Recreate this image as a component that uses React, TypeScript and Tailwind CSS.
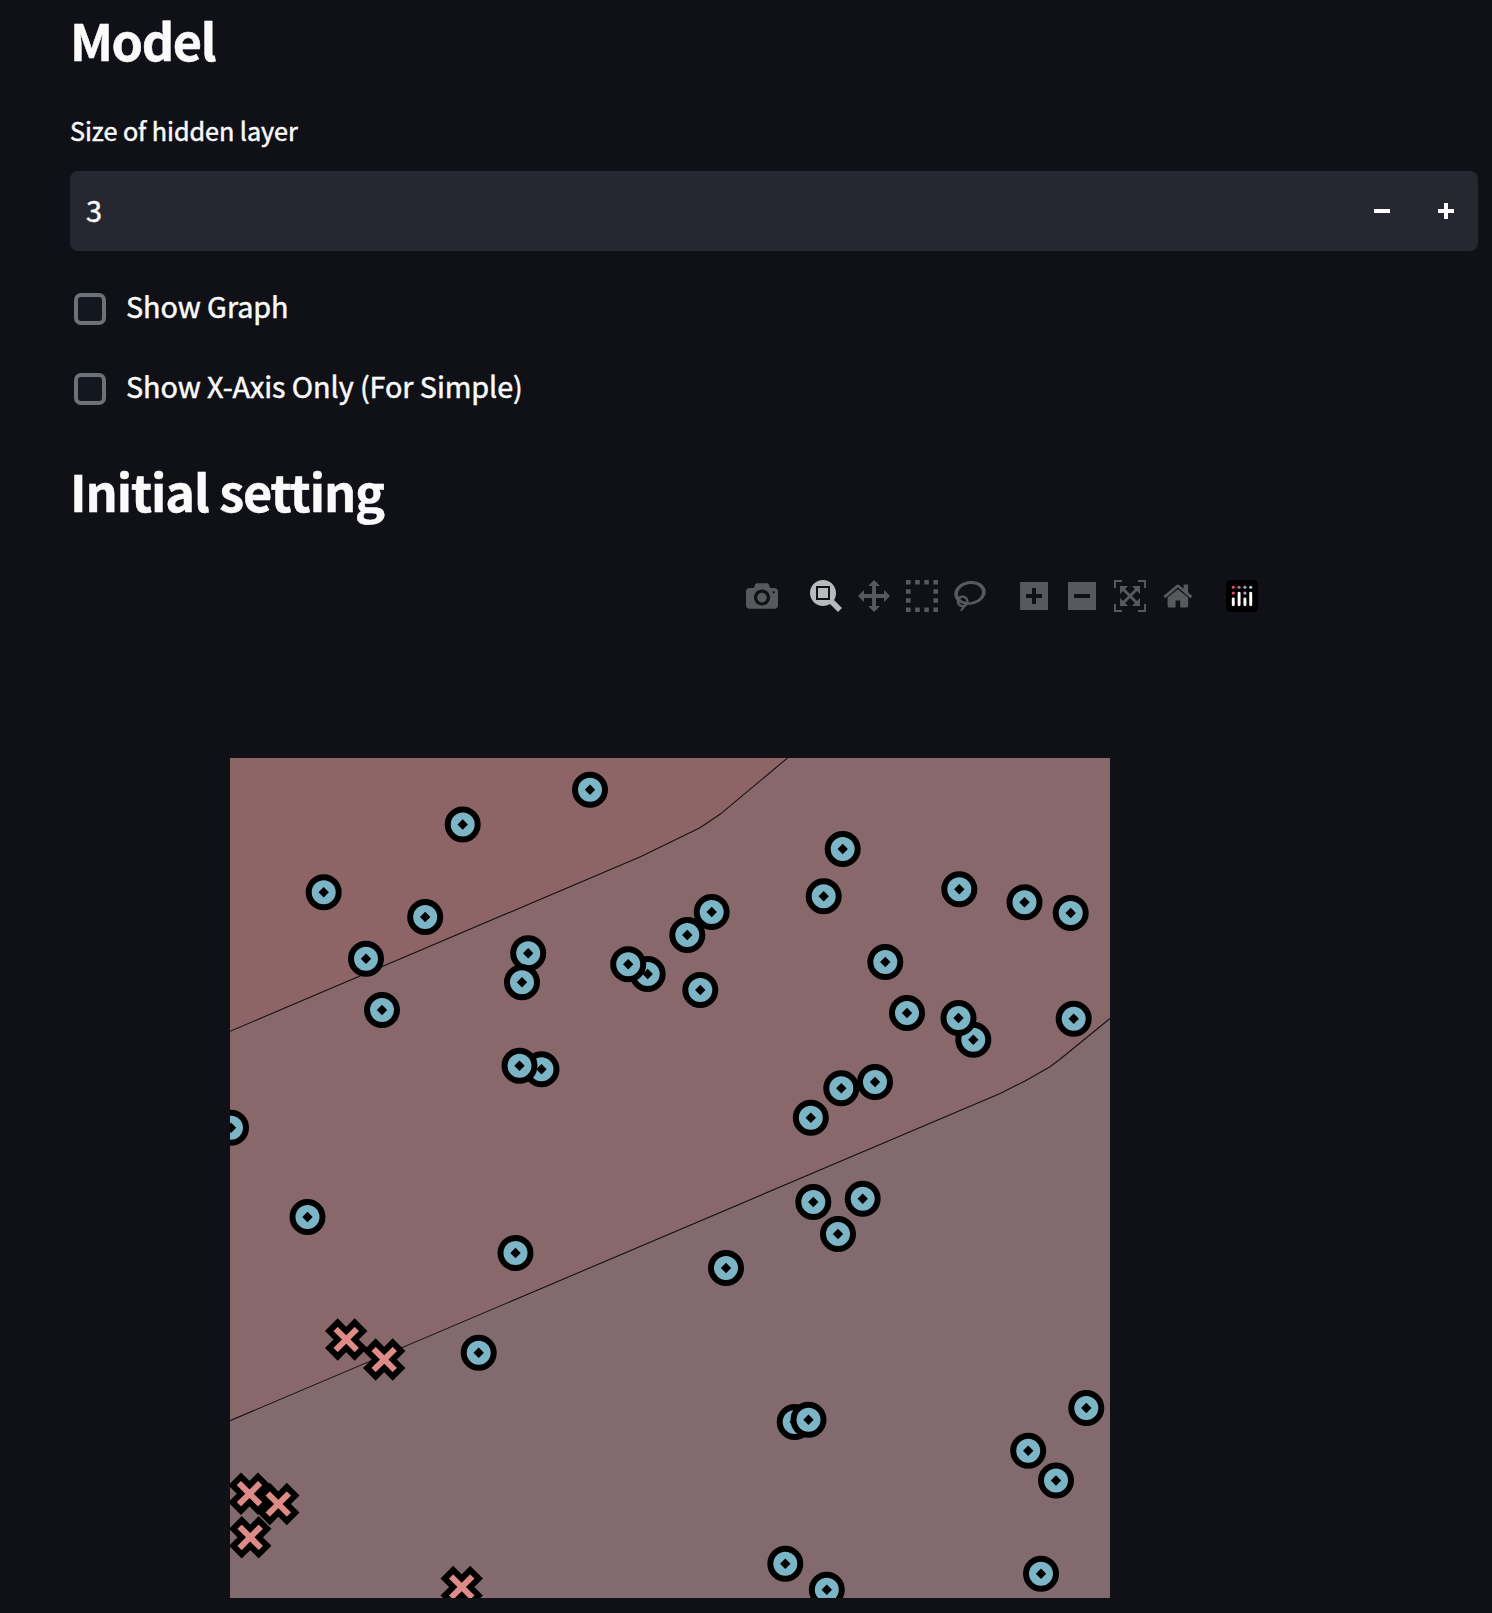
import React from "react";

type Point = [number, number];

const circles: Point[] = [
  [360, 31.7], [232.7, 66.5], [93.7, 134.3], [195.2, 159], [136, 200.7], [152, 252],
  [298.2, 195.3], [292, 224.3], [417.7, 216], [398.2, 206.3], [311.5, 311.3], [289.5, 307.8],
  [1, 369.7], [612.7, 91], [593.7, 138.3], [729.3, 131.3], [794.5, 144.3], [840.7, 155],
  [481.7, 154], [457.3, 177], [470.3, 232], [655.3, 204], [677, 255], [743.3, 281.7],
  [728.5, 260], [843.7, 260.7], [611.3, 330.3], [645, 324], [580.8, 359.7], [77.5, 459],
  [285.5, 495], [248.7, 594.8], [583.3, 444], [632.7, 440.7], [608, 476], [496, 510],
  [564.7, 664], [578.5, 661.7], [856.3, 650], [798.2, 692.7], [826, 722.5], [555.3, 805.7],
  [596.8, 831.7], [811, 815.8],
];

const crosses: Point[] = [
  [116.2, 581.5], [154.2, 601.5], [19.5, 735.7], [48.3, 746], [20.2, 779.3], [231.7, 829],
];

const upperLine = "M0,273.3L411,98.5L470,69.7L490,56.3L557.5,0";
const lowerLine = "M0,662.7L770.7,335.3L795,322.9L820,308.7L830,301.2L880,260.5";

const icons = {
  camera:
    "m500 450c-83 0-150-67-150-150 0-83 67-150 150-150 83 0 150 67 150 150 0 83-67 150-150 150z m400 150h-120c-16 0-34 13-39 29l-31 93c-6 15-23 28-40 28h-340c-16 0-34-13-39-28l-31-94c-6-15-23-28-40-28h-120c-55 0-100-45-100-100v-450c0-55 45-100 100-100h800c55 0 100 45 100 100v450c0 55-45 100-100 100z m-400-550c-138 0-250 112-250 250 0 138 112 250 250 250 138 0 250-112 250-250 0-138-112-250-250-250z m365 380c-19 0-35 16-35 35 0 19 16 35 35 35 19 0 35-16 35-35 0-19-16-35-35-35z",
  zoom:
    "m1000-25l-250 251c40 63 63 138 63 218 0 224-182 406-407 406-224 0-406-182-406-406s183-406 407-406c80 0 155 22 218 62l250-250 125 125z m-812 250l0 438 437 0 0-438-437 0z m62 375l313 0 0-312-313 0 0 312z",
  pan:
    "m1000 350l-187 188 0-125-250 0 0 250 125 0-188 187-187-187 125 0 0-250-250 0 0 125-188-188 186-187 0 125 252 0 0-250-125 0 187-188 188 188-125 0 0 250 250 0 0-126 187 188z",
  select:
    "m0 850l0-143 143 0 0 143-143 0z m286 0l0-143 143 0 0 143-143 0z m285 0l0-143 143 0 0 143-143 0z m286 0l0-143 143 0 0 143-143 0z m-857-286l0-143 143 0 0 143-143 0z m857 0l0-143 143 0 0 143-143 0z m-857-285l0-143 143 0 0 143-143 0z m857 0l0-143 143 0 0 143-143 0z m-857-286l0-143 143 0 0 143-143 0z m286 0l0-143 143 0 0 143-143 0z m285 0l0-143 143 0 0 143-143 0z m286 0l0-143 143 0 0 143-143 0z",
  lasso:
    "m1018 538c-36 207-290 336-568 286-277-48-473-256-436-463 10-57 36-108 76-151-13-66 11-137 68-183 34-28 75-41 114-42l-55-70 0 0c-2-1-3-2-4-3-10-14-8-34 5-45 14-11 34-8 45 4 1 1 2 3 2 5l0 0 113 140c16 11 31 24 45 40 4 3 6 7 8 11 48-3 100 0 151 9 278 48 473 255 436 462z m-624-379c-80 14-149 48-197 96 42 42 109 47 156 9 33-26 47-66 41-105z m-187-74c-19 16-33 37-39 60 50-32 109-55 174-68-42-25-95-24-135 8z m360 75c-34-7-69-9-102-8 8 62-16 128-68 170-73 59-175 54-244-5-9 20-16 40-20 61-28 159 121 317 333 354s407-60 434-217c28-159-121-318-333-355z",
  plus:
    "m1 787l0-875 875 0 0 875-875 0z m687-500l-187 0 0-187-125 0 0 187-188 0 0 125 188 0 0 187 125 0 0-187 187 0 0-125z",
  minus: "m0 788l0-876 875 0 0 876-875 0z m688-500l-500 0 0 125 500 0 0-125z",
  autoscale:
    "m250 850l-187 0-63 0 0-62 0-188 63 0 0 188 187 0 0 62z m688 0l-188 0 0-62 188 0 0-188 62 0 0 188 0 62-62 0z m-875-938l0 188-63 0 0-188 0-62 63 0 187 0 0 62-187 0z m875 188l0-188-188 0 0-62 188 0 62 0 0 62 0 188-62 0z m-125 188l-1 0-93-94-156 156 156 156 92-93 2 0 0 250-250 0 0-2 93-92-156-156-156 156 94 92 0 2-250 0 0-250 0 0 93 93 157-156-157-156-93 94 0 0 0-250 250 0 0 0-94 93 156 157 156-157-93-93 0 0 250 0 0 250z",
  home:
    "m786 296v-267q0-15-11-26t-25-10h-214v214h-143v-214h-214q-15 0-25 10t-11 26v267q0 1 0 2t0 2l321 264 321-264q1-1 1-4z m124 39l-34-41q-5-5-12-6h-2q-7 0-12 3l-386 322-386-322q-7-4-13-4-7 2-12 7l-35 41q-4 5-3 13t6 12l401 334q18 15 42 15t43-15l136-114v109q0 8 5 13t13 5h107q8 0 13-5t5-13v-227l122-102q5-5 6-12t-4-13z",
};

function ModeIcon({ d, w = 1000, active = false }: { d: string; w?: number; active?: boolean }) {
  return (
    <button className="flex size-8 items-center justify-center">
      <svg
        viewBox={`0 0 ${w} 1000`}
        style={{ width: Math.min(32, (w * 32) / 1000) }}
        className={active ? "h-8 shrink-0 fill-[#b9babc]" : "h-8 shrink-0 fill-[#58595d]"}
      >
        <path d={d} transform="matrix(1 0 0 -1 0 850)" />
      </svg>
    </button>
  );
}

function PlotlyLogo() {
  return (
    <svg viewBox="0 0 132 132" className="size-8">
      <rect width="132" height="132" rx="18" fill="#000" />
      <circle cx="102" cy="30" r="6.5" fill="#8cd6f0" />
      <circle cx="78" cy="30" r="6.5" fill="#a9a4cc" />
      <circle cx="78" cy="54" r="6.5" fill="#a9a4cc" />
      <circle cx="54" cy="30" r="6.5" fill="#c86a97" />
      <circle cx="30" cy="30" r="6.5" fill="#e8476f" />
      <circle cx="30" cy="54" r="6.5" fill="#e8476f" />
      <g fill="#fff">
        <rect x="24" y="72" width="12" height="36" rx="6" />
        <rect x="48" y="48" width="12" height="60" rx="6" />
        <rect x="72" y="72" width="12" height="36" rx="6" />
        <rect x="96" y="48" width="12" height="60" rx="6" />
      </g>
    </svg>
  );
}

function CheckRow({ label }: { label: string }) {
  return (
    <label className="flex h-8 items-start pl-1">
      <span className="size-8 rounded-[7px] border-4 border-[#6f7176] bg-[#131720]" />
      <span className="-mt-[3px] ml-5 text-[28.8px] leading-[32px] tracking-[-0.08px] whitespace-nowrap [-webkit-text-stroke:0.5px]">
        {label}
      </span>
    </label>
  );
}

function ContourPlot() {
  return (
    <svg viewBox="0 0 880 840" className="ml-40 mt-[146px] block h-[840px] w-[880px] overflow-hidden">
      <rect width="880" height="840" fill="#89686b" />
      <path d={`${upperLine}L0,0Z`} fill="#8e6567" />
      <path d={`${lowerLine}L880,840L0,840Z`} fill="#836a6e" />
      <g fill="none" stroke="#151113" strokeWidth="1.1">
        <path d={upperLine} />
        <path d={lowerLine} />
      </g>
      {circles.map(([x, y], i) => (
        <g key={i} transform={`translate(${x},${y})`}>
          <circle r="15" fill="#7cb5c5" stroke="#000" strokeWidth="6" />
          <path d="M0,-5.2L5.2,0L0,5.2L-5.2,0Z" fill="#000" />
        </g>
      ))}
      {crosses.map(([x, y], i) => (
        <path
          key={i}
          transform={`translate(${x},${y})`}
          d="M0,8.485l8.485,8.485l8.485,-8.485l-8.485,-8.485l8.485,-8.485l-8.485,-8.485l-8.485,8.485l-8.485,-8.485l-8.485,8.485l8.485,8.485l-8.485,8.485l8.485,8.485Z"
          fill="#de8a86"
          stroke="#000"
          strokeWidth="6"
        />
      ))}
    </svg>
  );
}

export default function App() {
  return (
    <main className="h-[1613px] w-full overflow-hidden bg-[#0f1116] pt-[6px] pr-[14px] pl-[70px] font-['Noto_Sans_CJK_JP',sans-serif] text-[#fafafa]">
      <h2 className="text-[50.4px] leading-[68px] font-bold tracking-[-1.4px] [-webkit-text-stroke:0.5px]">Model</h2>
      <div className="mt-[36px] text-[25.2px] leading-[40px] tracking-[-0.06px] [-webkit-text-stroke:0.5px]">
        Size of hidden layer
      </div>
      <div className="mt-[21px] flex h-20 items-center rounded-lg bg-[#262730] pl-4">
        <span className="grow pb-[2px] text-[28.8px] leading-[38px] [-webkit-text-stroke:0.5px]">3</span>
        <button className="flex size-16 items-center justify-center">
          <span className="h-1 w-4 bg-white" />
        </button>
        <button className="flex size-16 items-center justify-center">
          <svg viewBox="0 0 16 16" className="size-4 fill-white">
            <path d="M6 0h4v6h6v4h-6v6H6v-6H0V6h6z" />
          </svg>
        </button>
      </div>
      <div className="mt-[42px] flex flex-col gap-12">
        <CheckRow label="Show Graph" />
        <CheckRow label="Show X-Axis Only (For Simple)" />
      </div>
      <h2 className="mt-[52px] text-[50.4px] leading-[68px] font-bold tracking-[-1.09px] [-webkit-text-stroke:0.5px]">Initial setting</h2>
      <div className="mt-[55px] ml-[676px] flex gap-8">
        <ModeIcon d={icons.camera} />
        <div className="flex gap-4">
          <ModeIcon d={icons.zoom} active />
          <ModeIcon d={icons.pan} />
          <ModeIcon d={icons.select} />
          <ModeIcon d={icons.lasso} w={1031} />
        </div>
        <div className="flex gap-4">
          <ModeIcon d={icons.plus} w={875} />
          <ModeIcon d={icons.minus} w={875} />
          <ModeIcon d={icons.autoscale} />
          <ModeIcon d={icons.home} w={928.6} />
        </div>
        <PlotlyLogo />
      </div>
      <ContourPlot />
    </main>
  );
}
